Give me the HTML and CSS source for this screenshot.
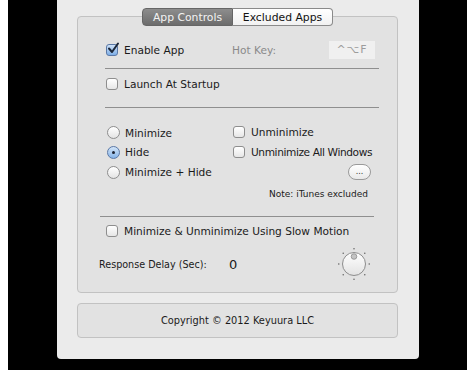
FILE: index.html
```html
<!DOCTYPE html>
<html lang="en">
<head>
  <meta charset="UTF-8" />
  <title>App Controls</title>
  <link rel="stylesheet" href="styles.css">
</head>
<body>
  <div class="backdrop">
    <div class="window">
      <div class="group">
        <div class="tabs">
          <span class="tab tab-active">App Controls</span>
          <span class="tab">Excluded Apps</span>
        </div>
        <div class="group-body">
          <div class="row row-enable">
            <label class="check check-enable">
              <span class="box box-on">
                <svg width="14" height="14" viewBox="0 0 14 14"><path d="M3 6.5 L6 10 L12 1.5" fill="none" stroke="#1c2738" stroke-width="2" stroke-linecap="round" stroke-linejoin="round"/></svg>
              </span>
              Enable App
            </label>
            <span class="hotkey-label">Hot Key:</span>
            <span class="hotkey">^⌥F</span>
          </div>
          <div class="sep"></div>
          <div class="row row-launch">
            <label class="check"><span class="box"></span>Launch At Startup</label>
          </div>
          <div class="sep sep-second"></div>

          <div class="options">
            <div class="col-left">
              <label class="radio-row r1"><span class="radio"></span>Minimize</label>
              <label class="radio-row r2"><span class="radio radio-on"></span>Hide</label>
              <label class="radio-row r3"><span class="radio"></span>Minimize + Hide</label>
            </div>
            <div class="col-right">
              <label class="check r1"><span class="box"></span>Unminimize</label>
              <label class="check r2 tight"><span class="box"></span>Unminimize All Windows</label>
              <div class="r3 btn-row"><button class="more">...</button></div>
            </div>
          </div>
          <div class="note">Note: iTunes excluded</div>
          <div class="sep sep-wide"></div>

          <div class="row row-slow">
            <label class="check"><span class="box"></span>Minimize &amp; Unminimize Using Slow Motion</label>
          </div>
          <div class="row row-delay">
            <span class="delay-label">Response Delay (Sec):</span>
            <span class="delay-value">0</span>
            <svg class="knob" width="32" height="32" viewBox="0 0 32 32">
              <defs>
                <linearGradient id="knobFill" x1="0" y1="0" x2="0" y2="1">
                  <stop offset="0" stop-color="#ffffff"/>
                  <stop offset="1" stop-color="#e2e2e2"/>
                </linearGradient>
              </defs>
              <g fill="#555">
                <circle cx="16" cy="0.8" r="0.7"/>
                <circle cx="16" cy="31.2" r="0.7"/>
                <circle cx="0.8" cy="16" r="0.7"/>
                <circle cx="31.2" cy="16" r="0.7"/>
                <circle cx="5.2" cy="5.2" r="0.7"/>
                <circle cx="26.8" cy="5.2" r="0.7"/>
                <circle cx="5.2" cy="26.8" r="0.7"/>
                <circle cx="26.8" cy="26.8" r="0.7"/>
              </g>
              <circle cx="16" cy="16" r="11.5" fill="url(#knobFill)" stroke="#8c8c8c" stroke-width="1"/>
              <circle cx="16" cy="8.5" r="2.8" fill="#c4c4c4" stroke="#8a8a8a" stroke-width="0.8"/>
            </svg>
          </div>
        </div>
      </div>
      <div class="footer">Copyright © 2012 Keyuura LLC</div>
    </div>
  </div>
</body>
</html>
```

FILE: styles.css
```css
body {
  margin: 0;
  background: #ffffff;
  font-family: 'DejaVu Sans', sans-serif;
  color: #1a1a1a;
}

.backdrop {
  margin-left: 8px;
  width: 459px;
  height: 370px;
  padding-left: 49px;
  box-sizing: border-box;
  background: #000;
}

.window {
  width: 362px;
  height: 359px;
  background: #ebebeb;
  border-radius: 0 0 4px 4px;
  padding-top: 16px;
  box-sizing: border-box;
}

.group {
  margin-left: 20px;
  width: 321px;
  height: 277px;
  box-sizing: border-box;
  background: #e2e2e2;
  border: 1px solid #c2c2c2;
  border-radius: 4px;
}

.tabs {
  display: flex;
  justify-content: center;
  margin-top: -9px;
}

.tab {
  width: 100px;
  height: 18px;
  line-height: 17px;
  box-sizing: border-box;
  font-size: 10.8px;
  text-align: center;
  white-space: nowrap;
  border: 1px solid #8a8a8a;
  background: linear-gradient(#ffffff, #f1f1f1);
  color: #111;
}

.tab:first-child {
  border-radius: 4px 0 0 4px;
}

.tab:last-child {
  border-left: none;
  border-radius: 0 4px 4px 0;
}

.tab-active {
  width: 91px;
  background: linear-gradient(#8d8d8d, #6c6c6c);
  color: #f3f3f3;
  border-color: #666;
}

.group-body {
  padding-left: 28px;
  font-size: 10.6px;
}

.row {
  display: flex;
  align-items: center;
  height: 18px;
}

.row-enable {
  margin-top: 15px;
}

.check-enable {
  width: 126px;
}

.hotkey-label {
  width: 97px;
  color: #8a8a8a;
}

.hotkey {
  width: 46px;
  height: 18px;
  line-height: 18px;
  text-align: center;
  background: #f0f0f0;
  color: #9c9c9c;
  font-size: 11px;
  letter-spacing: 1px;
}

.sep {
  margin: 9px 0 0 -1px;
  width: 274px;
  height: 1px;
  background: #8f8f8f;
}

.row-launch {
  margin-top: 6px;
}

.sep-second {
  margin-top: 14px;
}

.check,
.radio-row {
  display: flex;
  align-items: center;
  white-space: nowrap;
}

.tight {
  letter-spacing: -0.4px;
}

.box {
  position: relative;
  width: 12px;
  height: 12px;
  box-sizing: border-box;
  margin-right: 6px;
  border: 1px solid #8e8e8e;
  border-radius: 3px;
  background: linear-gradient(#ffffff, #e6e6e6);
  flex-shrink: 0;
}

.box-on {
  background: linear-gradient(#cfe2f8, #7eaee6);
  border-color: #5a78a6;
}

.box svg {
  position: absolute;
  left: -1px;
  top: -3px;
}

.radio {
  position: relative;
  width: 13px;
  height: 13px;
  box-sizing: border-box;
  margin-right: 5px;
  border: 1px solid #8e8e8e;
  border-radius: 50%;
  background: linear-gradient(#ffffff, #e4e4e4);
  flex-shrink: 0;
}

.radio-on {
  background: linear-gradient(#d3e5f9, #86b4e8);
  border-color: #5a78a6;
}

.radio-on::after {
  content: "";
  position: absolute;
  left: 4px;
  top: 4px;
  width: 3px;
  height: 3px;
  border-radius: 50%;
  background: #1c2230;
}

.options {
  display: flex;
  margin-top: 15px;
}

.col-left {
  width: 127px;
  padding-left: 1px;
  box-sizing: border-box;
}

.col-right {
  width: 138px;
}

.r1 {
  height: 19px;
}

.r2 {
  height: 20px;
}

.r3 {
  height: 20px;
}

.col-right .r1 {
  height: 18px;
}

.col-right .r2 {
  height: 21px;
}

.btn-row {
  display: flex;
  align-items: center;
  justify-content: flex-end;
}

.more {
  width: 23px;
  height: 16px;
  padding: 0;
  border: 1px solid #9a9a9a;
  border-radius: 8px;
  background: linear-gradient(#ffffff, #e9e9e9);
  font-family: 'DejaVu Sans', sans-serif;
  font-size: 8px;
  line-height: 10px;
  color: #333;
}

.note {
  margin-top: 5px;
  width: 262px;
  height: 14px;
  line-height: 14px;
  text-align: right;
  font-size: 9px;
}

.sep-wide {
  margin: 15px 0 0 -6px;
}

.row-slow {
  margin-top: 5px;
}

.row-delay {
  margin: 8px 0 0 -7px;
  height: 32px;
}

.delay-label {
  width: 130px;
  font-size: 9.6px;
}

.delay-value {
  width: 109px;
  font-size: 13px;
}

.footer {
  margin: 10px 0 0 20px;
  width: 321px;
  height: 35px;
  box-sizing: border-box;
  border: 1px solid #c2c2c2;
  border-radius: 4px;
  background: #e2e2e2;
  font-size: 9.8px;
  line-height: 33px;
  text-align: center;
}
```
